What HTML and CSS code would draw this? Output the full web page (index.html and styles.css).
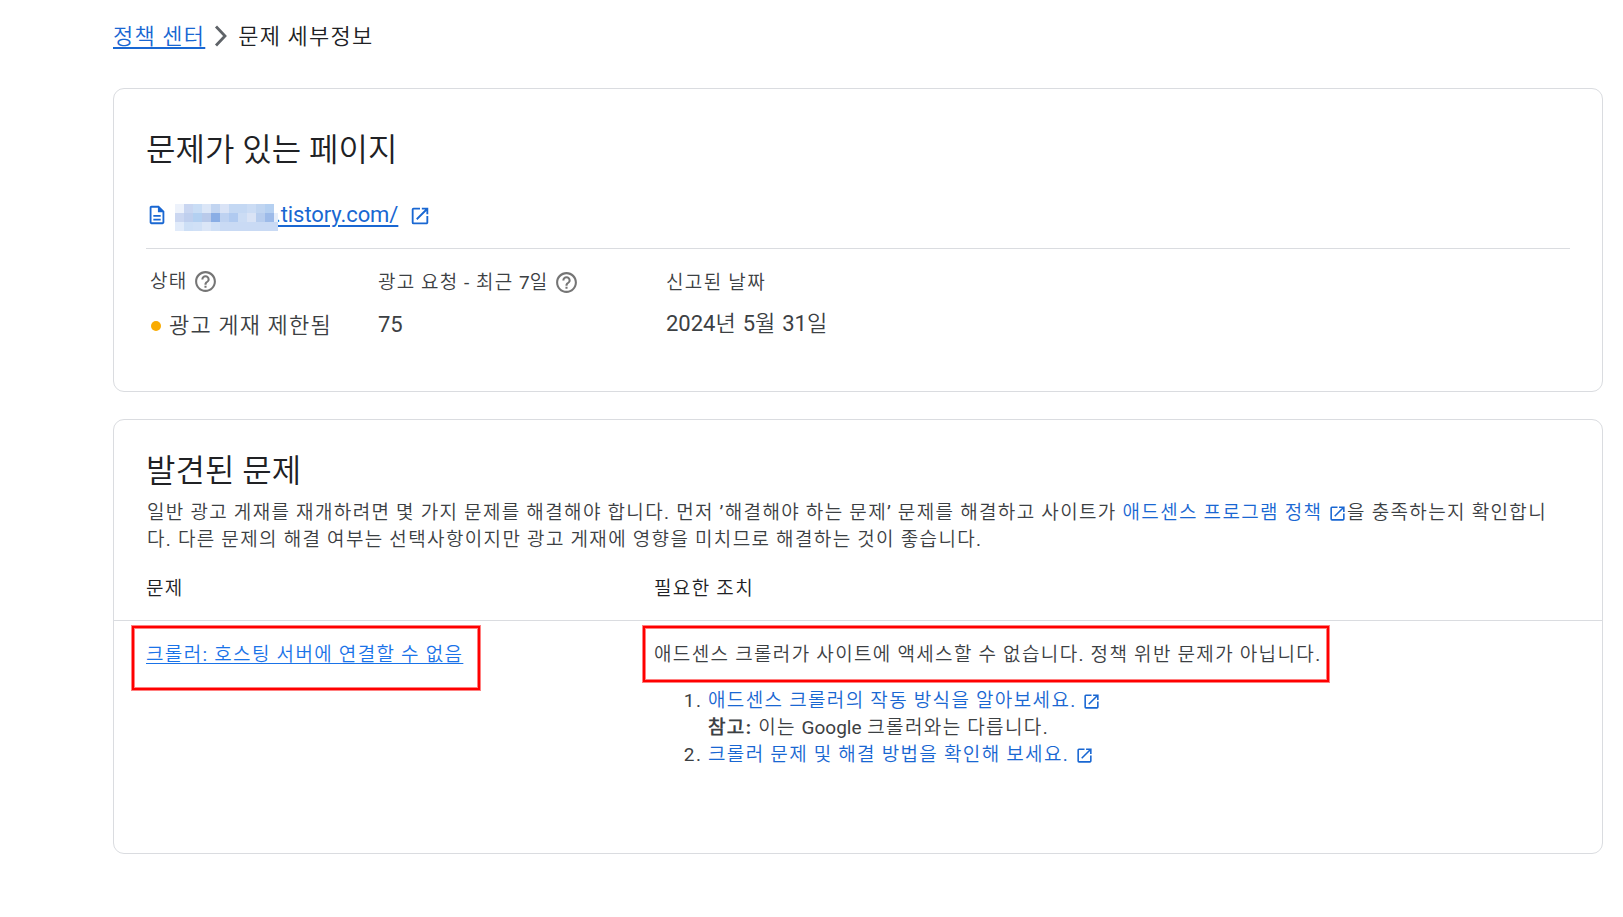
FILE: index.html
```html
<!DOCTYPE html>
<html lang="ko">
<head>
<meta charset="utf-8">
<title>문제 세부정보</title>
<link rel="stylesheet" href="styles.css">
</head>
<body>
<svg class="sprite" aria-hidden="true">
  <symbol id="open" viewBox="0 0 24 24"><path d="M19 19H5V5h7V3H5a2 2 0 0 0-2 2v14a2 2 0 0 0 2 2h14c1.100 0 2-.900 2-2v-7h-2v7zM14 3v2h3.590l-9.830 9.830 1.410 1.410L19 6.410V10h2V3h-7z"/></symbol>
  <symbol id="help" viewBox="0 0 24 24"><path d="M11 18h2v-2h-2v2zm1-16C6.480 2 2 6.480 2 12s4.480 10 10 10 10-4.480 10-10S17.520 2 12 2zm0 18c-4.410 0-8-3.590-8-8s3.590-8 8-8 8 3.590 8 8-3.590 8-8 8zm0-14c-2.210 0-4 1.790-4 4h2c0-1.100.900-2 2-2s2 .900 2 2c0 2-3 1.750-3 5h2c0-2.250 3-2.500 3-5 0-2.210-1.790-4-4-4z"/></symbol>
  <symbol id="page" viewBox="0 0 24 24"><path d="M8 16h8v2H8zm0-4h8v2H8zm6-10H6c-1.100 0-2 .900-2 2v16c0 1.100.890 2 1.990 2H18c1.100 0 2-.900 2-2V8l-6-6zm4 18H6V4h7v5h5v11z"/></symbol>
</svg>
<nav class="crumbs">
  <a class="crumb-link" href="#">정책 센터</a>
  <svg class="chevron" viewBox="0 0 14 22"><path d="M2 1.500l9 9.500-9 9.500"/></svg>
  <span class="crumb-current">문제 세부정보</span>
</nav>
<main>
  <section class="card pages">
    <h2 class="title">문제가 있는 페이지</h2>
    <div class="site">
      <svg class="icon-page"><use href="#page"/></svg>
      <svg class="mosaic" viewBox="0 0 103 27" shape-rendering="crispEdges">
        <path fill="#edf2fb" d="M0 0h9v9H0z"/><path fill="#c9d6f1" d="M9 0h9v9H9z"/><path fill="#c9ddf5" d="M18 0h9v9h-9z"/><path fill="#dbe6f7" d="M27 0h9v9h-9z"/><path fill="#c2d5f1" d="M36 0h9v9h-9z"/><path fill="#d9e3f6" d="M45 0h9v9h-9z"/><path fill="#c4d8f3" d="M54 0h18v9H54z"/><path fill="#cbdcf4" d="M72 0h9v9h-9z"/><path fill="#c0d5f1" d="M81 0h9v9h-9z"/><path fill="#b5d0f1" d="M90 0h9v9h-9z"/>
        <path fill="#cbd7f1" d="M0 9h9v9H0z"/><path fill="#bfcfee" d="M9 9h9v9H9z"/><path fill="#b3d0f1" d="M18 9h9v9h-9z"/><path fill="#b9caea" d="M27 9h9v9h-9z"/><path fill="#8aaee5" d="M36 9h9v9h-9z"/><path fill="#bed2f1" d="M45 9h9v9h-9z"/><path fill="#b0caf0" d="M54 9h9v9h-9z"/><path fill="#cbdcf4" d="M63 9h9v9h-9z"/><path fill="#d9e3f5" d="M72 9h9v9h-9z"/><path fill="#b7cdee" d="M81 9h9v9h-9z"/><path fill="#9dbbe9" d="M90 9h9v9h-9z"/><path fill="#e6eefa" d="M99 9h4v9h-4z"/>
        <path fill="#e1ebfa" d="M0 18h9v9H0z"/><path fill="#cddff6" d="M9 18h9v9H9z"/><path fill="#d0e0f6" d="M18 18h9v9h-9z"/><path fill="#dbe6f7" d="M27 18h9v9h-9z"/><path fill="#d0e0f6" d="M36 18h9v9h-9z"/><path fill="#c9daf4" d="M45 18h58v9H45z"/>
      </svg>
      <a class="site-link" href="#">.tistory.com/</a>
      <svg class="icon-open-lg"><use href="#open"/></svg>
    </div>
    <div class="stats">
      <div class="stat status">
        <div class="label">상태 <svg class="icon-help"><use href="#help"/></svg></div>
        <div class="value"><i class="dot"></i>광고 게재 제한됨</div>
      </div>
      <div class="stat requests">
        <div class="label"><span class="label-text">광고 요청 - 최근 <span class="latin">7</span>일</span> <svg class="icon-help"><use href="#help"/></svg></div>
        <div class="value"><span class="latin">75</span></div>
      </div>
      <div class="stat date">
        <div class="label">신고된 날짜</div>
        <div class="value"><span class="latin">2024</span>년 <span class="latin">5</span>월 <span class="latin">31</span>일</div>
      </div>
    </div>
  </section>
  <section class="card issues">
    <h2 class="title">발견된 문제</h2>
    <p class="intro"><span class="line">일반 광고 게재를 재개하려면 몇 가지 문제를 해결해야 합니다. 먼저 ’해결해야 하는 문제’ 문제를 해결하고 사이트가 <a class="link" href="#">애드센스 프로그램 정책 <svg class="icon-open"><use href="#open"/></svg></a>을 충족하는지 확인합니</span><span class="line">다. 다른 문제의 해결 여부는 선택사항이지만 광고 게재에 영향을 미치므로 해결하는 것이 좋습니다.</span></p>
    <div class="row head">
      <div class="cell">문제</div>
      <div class="cell">필요한 조치</div>
    </div>
    <div class="row body">
      <div class="cell"><a class="issue-link" href="#">크롤러: 호스팅 서버에 연결할 수 없음</a><span class="mark mark-issue"></span></div>
      <div class="cell">
        <p class="summary">애드센스 크롤러가 사이트에 액세스할 수 없습니다. 정책 위반 문제가 아닙니다.<span class="mark mark-summary"></span></p>
        <ol class="steps">
          <li><a class="link" href="#">애드센스 크롤러의 작동 방식을 알아보세요. <svg class="icon-open"><use href="#open"/></svg></a><br><b>참고:</b> 이는 <span class="latin">Google</span> 크롤러와는 다릅니다.</li>
          <li><a class="link" href="#">크롤러 문제 및 해결 방법을 확인해 보세요. <svg class="icon-open"><use href="#open"/></svg></a></li>
        </ol>
      </div>
    </div>
  </section>
</main>
</body>
</html>
```

FILE: styles.css
```css
* { box-sizing: border-box; }
body {
  margin: 0;
  padding: 19px 20px 0 113px;
  background: #fff;
  color: #3c4043;
  font: 19px/27px Roboto, "Noto Sans CJK KR DemiLight", "Noto Sans CJK KR Light", "Noto Sans CJK KR", sans-serif;
  letter-spacing: 1.38px;
  word-spacing: -.4px;
}
h2, p, ol { margin: 0; font-weight: 400; }
svg { fill: currentColor; }
.sprite { position: absolute; width: 0; height: 0; }
.latin { letter-spacing: 0; }

.crumbs { display: flex; align-items: center; height: 34px; font-size: 22px; letter-spacing: 1.25px; white-space: nowrap; }
.crumb-link { color: #1967d2; text-decoration-thickness: 2px; text-underline-offset: 3px; }
.chevron { width: 14px; height: 22px; margin: 0 10px 0 9px; fill: none; stroke: #5f6368; stroke-width: 2.800px; }
.crumb-current { color: #202124; }

.card { border: 1px solid #dadce0; border-radius: 11px; }
.pages { height: 304px; margin-top: 35px; padding: 39px 32px 0; }
.title { color: #202124; font-size: 32px; line-height: 44px; letter-spacing: 0; word-spacing: 0; white-space: nowrap; }

.site { display: flex; height: 77px; padding-top: 32px; border-bottom: 1px solid #dadce0; color: #1967d2; }
.icon-page { width: 22px; height: 22px; }
.mosaic { position: relative; z-index: 1; width: 103px; height: 27px; margin: 0 0 0 7px; }
.site-link { margin: -3px 0 0 -3px; color: #1967d2; font-size: 22px; letter-spacing: -.08px; text-decoration-thickness: 2px; text-underline-offset: 3px; }
.icon-open-lg { width: 22px; height: 22px; margin: 1px 0 0 11px; }

.stats { display: flex; padding: 19px 4px 0; white-space: nowrap; }
.status { width: 228px; }
.requests { width: 288px; }
.label { display: flex; align-items: center; height: 28px; }
.label-text { word-spacing: -.800px; }
.status .label { height: 26px; margin-bottom: 17px; }
.icon-help { width: 25px; height: 25px; margin-left: 5px; color: #757575; }
.value { display: flex; align-items: center; height: 28px; margin-top: 14px; font-size: 22px; letter-spacing: 1.23px; white-space: pre; }
.date .value { height: 27px; letter-spacing: .95px; }
.dot { width: 10px; height: 10px; margin: 2px 8px 0 1px; border-radius: 50%; background: #f9ab00; }

.issues { height: 435px; margin-top: 27px; padding-top: 29px; }
.issues .title { padding-left: 32px; }
.intro { padding: 6px 32px 0 33px; white-space: nowrap; }
.line { display: block; height: 27px; }
.link { color: #1967d2; text-decoration: none; }
.icon-open { width: 19px; height: 19px; vertical-align: -4px; }
.row { display: grid; grid-template-columns: 508px 1fr; padding-left: 32px; white-space: nowrap; }
.head { height: 68px; padding-top: 22px; border-bottom: 1px solid #dadce0; color: #202124; }
.body { padding-top: 20px; }
.cell { position: relative; }
.issue-link { color: #1a73e8; text-decoration-thickness: 1px; text-underline-offset: 2px; }
.summary { position: relative; }
.steps { padding: 19px 0 0 54px; }
/* 2px red frame with a soft 1px edge on each side */
.mark { position: absolute; border: 2px solid #f00; box-shadow: 0 0 0 1px #ff8080, inset 0 0 0 1px #ff8080; }
.mark-issue { left: -14px; top: -15px; width: 348px; height: 64px; }
.mark-summary { left: -11px; top: -15px; width: 686px; height: 56px; }
```
